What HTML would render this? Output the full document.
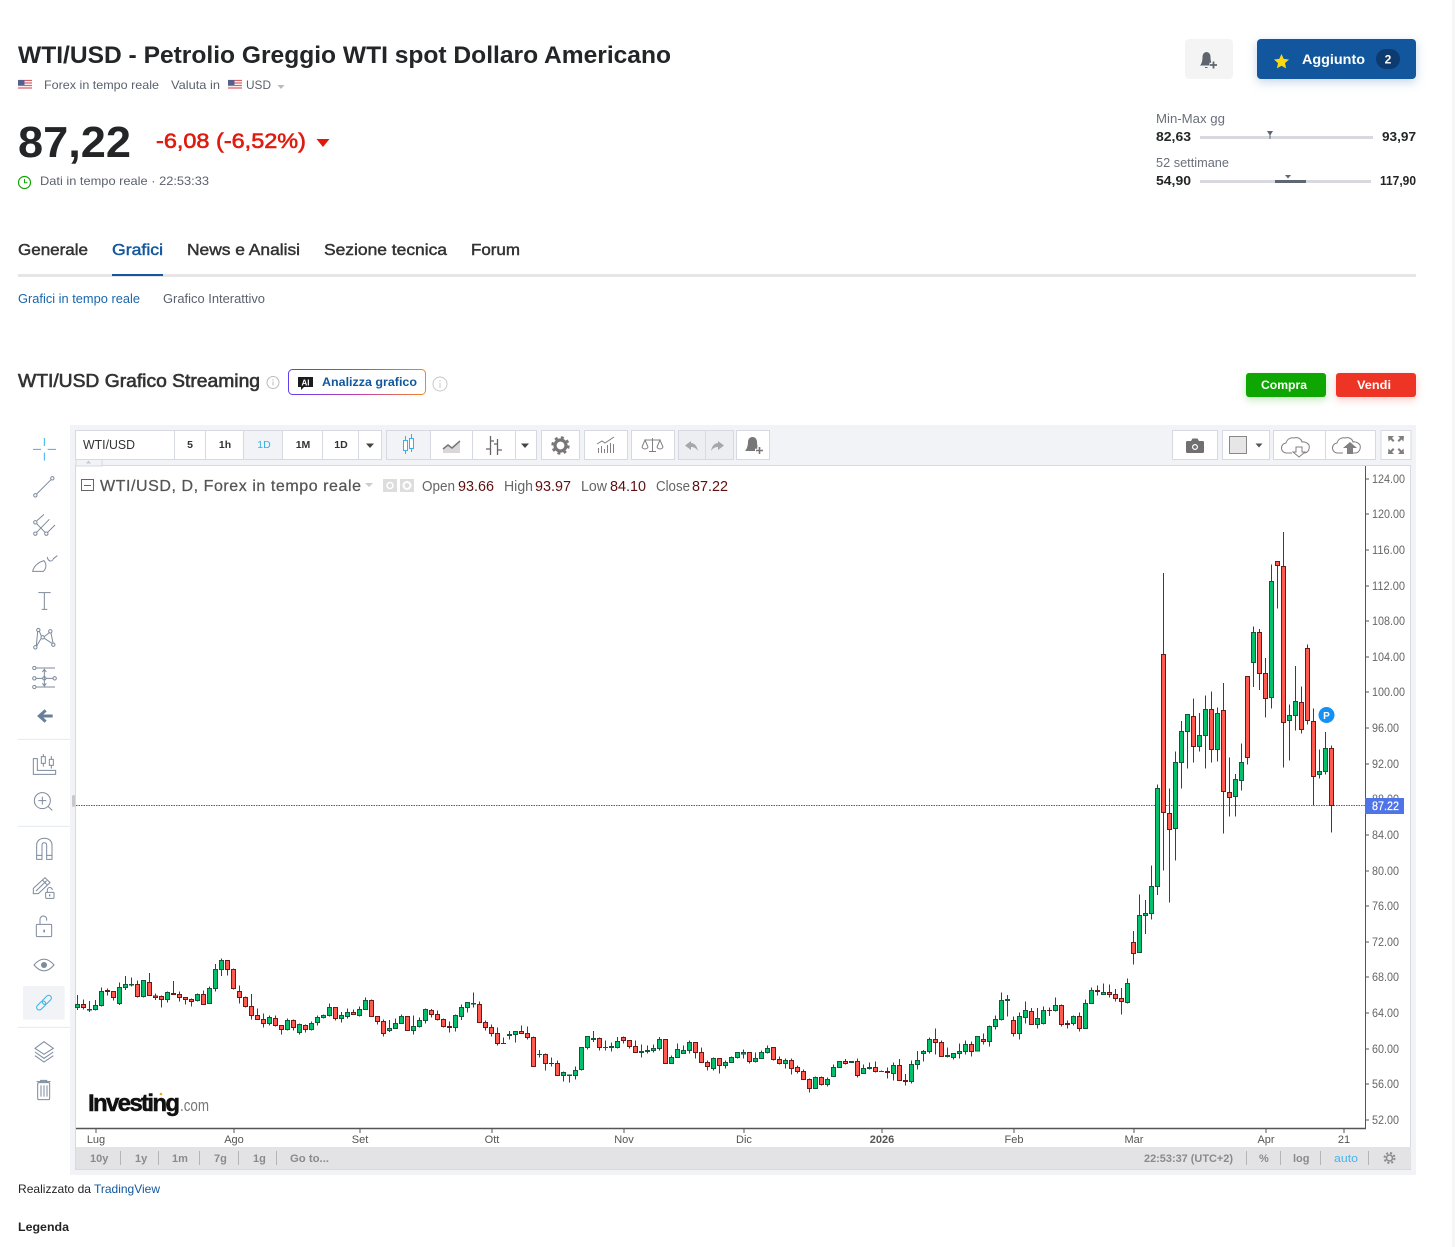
<!DOCTYPE html>
<html lang="it"><head><meta charset="utf-8"><title>WTI/USD Grafico</title>
<style>
html,body{margin:0;padding:0;background:#fff;width:1455px;height:1247px;overflow:hidden}
svg{display:block;font-family:"Liberation Sans",Arial,sans-serif}
.w{fill:none;stroke:#1c5039;stroke-width:3}
.g{fill:#03c06c;stroke:#14583c;stroke-width:3}
.r{fill:#ff5a50;stroke:#6b1a18;stroke-width:3}
.ic{fill:none;stroke:#7c8a9c;stroke-width:3}
.gy{fill:#808080}
.b{fill:#fff;stroke:#d6d9e1}
.p{font-size:12px;fill:#666}
.tm{font-size:11px;fill:#555;text-anchor:middle}
.bb{font-size:11px;fill:#8a8a8a;font-weight:bold}
.tb{font-size:10.5px;fill:#333;text-anchor:middle;font-weight:bold}
</style></head><body>
<svg width="1455" height="1247" viewBox="0 0 1455 1247" xmlns="http://www.w3.org/2000/svg">
<rect x="1452" y="0" width="3" height="1247" fill="#f6f6f6"/>

<!-- Heading -->
<text x="18" y="63" font-size="24" font-weight="bold" fill="#232526" textLength="653" lengthAdjust="spacingAndGlyphs">WTI/USD - Petrolio Greggio WTI spot Dollaro Americano</text>
<g id="flag"><rect x="18" y="80" width="14" height="10" fill="#fff"/><path d="M18 80.5h14M18 83h14M18 85.5h14M18 88h14" stroke="#d9616a" stroke-width="1.2"/><rect x="18" y="80" width="6.5" height="5" fill="#55608f"/></g>
<text x="44" y="89" font-size="12" fill="#5b616e" textLength="115" lengthAdjust="spacingAndGlyphs">Forex in tempo reale</text>
<text x="171" y="89" font-size="12" fill="#5b616e" textLength="49" lengthAdjust="spacingAndGlyphs">Valuta in</text>
<rect x="228" y="80" width="14" height="10" fill="#fff"/><path d="M228 80.5h14M228 83h14M228 85.5h14M228 88h14" stroke="#d9616a" stroke-width="1.2"/><rect x="228" y="80" width="6.5" height="5" fill="#55608f"/>
<text x="246" y="89" font-size="12" fill="#5b616e" textLength="25" lengthAdjust="spacingAndGlyphs">USD</text>
<path d="M277.500 85h7l-3.500 4z" fill="#b5bac4"/>

<text x="18" y="157" font-size="44" font-weight="bold" fill="#232526" textLength="113" lengthAdjust="spacingAndGlyphs">87,22</text>
<text x="156" y="148" font-size="21" fill="#e01b0e" stroke="#e01b0e" stroke-width=".6" textLength="150" lengthAdjust="spacingAndGlyphs">-6,08 (-6,52%)</text>
<path d="M316.500 139h13l-6.500 8z" fill="#dd1a0c"/>
<circle cx="24.500" cy="182.500" r="6" fill="none" stroke="#0ea600" stroke-width="1.200"/><path d="M24.500 179v3.800h3" fill="none" stroke="#0ea600"/>
<text x="40" y="185" font-size="12" fill="#5b616e" textLength="169" lengthAdjust="spacingAndGlyphs">Dati in tempo reale · 22:53:33</text>

<!-- top right -->
<rect x="1185" y="39" width="48" height="40" rx="4" fill="#f4f4f5"/>
<path d="M1201 65c1.500-2 2-5 2-8 0-2.800 1.500-4.500 3.500-4.500s3.500 1.700 3.500 4.500c0 3 .5 6 2 8zM1205 67.500h2.500" fill="#60646e" stroke="#60646e"/>
<path d="M1209.500 65h8M1213.500 61v8" stroke="#f4f4f5" stroke-width="4.500" fill="none"/>
<path d="M1210 65h7M1213.500 61.500v7" stroke="#60646e" stroke-width="1.800" fill="none"/>
<rect x="1257" y="39" width="159" height="40" rx="4" fill="#12579d" style="filter:drop-shadow(0 3px 5px rgba(18,87,157,.25))"/>
<path d="M1281.500 54l2.200 4.900 5.300.6-4 3.600 1.100 5.300-4.600-2.700-4.600 2.700 1.100-5.300-4-3.600 5.300-.6z" fill="#fcd80e"/>
<text x="1302" y="64" font-size="14" font-weight="bold" fill="#fff" textLength="63" lengthAdjust="spacingAndGlyphs">Aggiunto</text>
<rect x="1376" y="49" width="24" height="20" rx="10" fill="#0d3b70"/>
<text x="1388" y="63.500" font-size="12" font-weight="bold" fill="#fff" text-anchor="middle">2</text>

<text x="1156" y="123" font-size="12.500" fill="#6a6f7a" textLength="69" lengthAdjust="spacingAndGlyphs">Min-Max gg</text>
<text x="1156" y="141" font-size="12.500" font-weight="bold" fill="#232526" textLength="35" lengthAdjust="spacingAndGlyphs">82,63</text>
<rect x="1200" y="136" width="173" height="3" fill="#d8d9de"/>
<path d="M1267 131h6l-2.500 4v4h-1v-4z" fill="#5f6673"/>
<text x="1382" y="141" font-size="12.500" font-weight="bold" fill="#232526" textLength="34" lengthAdjust="spacingAndGlyphs">93,97</text>
<text x="1156" y="167" font-size="12.500" fill="#6a6f7a" textLength="73" lengthAdjust="spacingAndGlyphs">52 settimane</text>
<text x="1156" y="185" font-size="12.500" font-weight="bold" fill="#232526" textLength="35" lengthAdjust="spacingAndGlyphs">54,90</text>
<rect x="1200" y="180" width="171" height="3" fill="#d8d9de"/><rect x="1275" y="180" width="31" height="3" fill="#5f6673"/>
<path d="M1285 175h6l-3 3.500z" fill="#5f6673"/>
<text x="1380" y="185" font-size="12.500" font-weight="bold" fill="#232526" textLength="36" lengthAdjust="spacingAndGlyphs">117,90</text>

<!-- tabs -->
<g font-size="16" fill="#333" stroke="#333" stroke-width=".45">
<text x="18" y="255" textLength="70" lengthAdjust="spacingAndGlyphs">Generale</text>
<text x="112" y="255" fill="#12579d" stroke="#12579d" textLength="51" lengthAdjust="spacingAndGlyphs">Grafici</text>
<text x="187" y="255" textLength="113" lengthAdjust="spacingAndGlyphs">News e Analisi</text>
<text x="324" y="255" textLength="123" lengthAdjust="spacingAndGlyphs">Sezione tecnica</text>
<text x="471" y="255" textLength="49" lengthAdjust="spacingAndGlyphs">Forum</text>
</g>
<rect x="18" y="274" width="1398" height="3" fill="#e6e6e9"/><rect x="112" y="274" width="51" height="2" fill="#12579d"/>
<text x="18" y="303" font-size="12.500" fill="#1a66ad" textLength="122" lengthAdjust="spacingAndGlyphs">Grafici in tempo reale</text>
<text x="163" y="303" font-size="12.500" fill="#5b616e" textLength="102" lengthAdjust="spacingAndGlyphs">Grafico Interattivo</text>

<!-- section title -->
<text x="18" y="387" font-size="18" fill="#333" stroke="#333" stroke-width=".6" textLength="242" lengthAdjust="spacingAndGlyphs">WTI/USD Grafico Streaming</text>
<circle cx="273" cy="382.500" r="6" fill="none" stroke="#bcbcbc"/><path d="M273 381.500v4M273 379v1.500" stroke="#bcbcbc"/>
<defs><linearGradient id="ai" x1="0" x2="1" y1="0" y2="0"><stop offset="0" stop-color="#5b3ff0"/><stop offset=".5" stop-color="#c03bb0"/><stop offset="1" stop-color="#f7851e"/></linearGradient></defs>
<rect x="288.500" y="369.500" width="137" height="25" rx="4" fill="#fff" stroke="url(#ai)"/>
<path d="M298 377h15v10h-9l-3 3v-3h-3z" fill="#1c1c1c"/>
<text x="305.500" y="385.500" font-size="8" font-weight="bold" fill="#fff" text-anchor="middle">AI</text>
<text x="322" y="386" font-size="12" font-weight="bold" fill="#12579d" textLength="95" lengthAdjust="spacingAndGlyphs">Analizza grafico</text>
<circle cx="440" cy="384" r="7" fill="none" stroke="#c8c8c8"/><path d="M440 383v5M440 380v1.500" stroke="#c8c8c8"/>
<rect x="1246" y="373" width="80" height="24" rx="3" fill="#0ea600" style="filter:drop-shadow(0 3px 4px rgba(14,166,0,.25))"/>
<text x="1261" y="389" font-size="12" font-weight="bold" fill="#fff" textLength="46" lengthAdjust="spacingAndGlyphs">Compra</text>
<rect x="1336" y="373" width="80" height="24" rx="3" fill="#ee3424" style="filter:drop-shadow(0 3px 4px rgba(238,52,36,.25))"/>
<text x="1357" y="389" font-size="12" font-weight="bold" fill="#fff" textLength="34" lengthAdjust="spacingAndGlyphs">Vendi</text>

<!-- chart container -->
<rect x="70" y="425" width="1346" height="750" fill="#f1f3f6"/>
<rect x="75.500" y="465.500" width="1335" height="704" fill="#fff" stroke="#d6d9e1"/>

<!-- top toolbar -->
<rect x="76" y="459" width="26" height="7" fill="#f1f3f6" stroke="#d6d9e1"/><path d="M86 463.500h5l-2.500-3z" fill="#c5c8d0"/>
<rect x="75.500" y="430.500" width="306" height="29" class="b"/>
<rect x="244" y="431" width="39" height="28" fill="#f1f3f6"/>
<path d="M174.500 431v28M205.500 431v28M243.500 431v28M282.500 431v28M322.500 431v28M358.500 431v28" stroke="#d6d9e1"/>
<text x="83" y="449" font-size="12.500" fill="#333" textLength="52" lengthAdjust="spacingAndGlyphs">WTI/USD</text>
<text x="190" y="448" class="tb">5</text><text x="225" y="448" class="tb">1h</text>
<text x="264" y="448" class="tb" style="fill:#35b2e8;font-weight:normal">1D</text>
<text x="303" y="448" class="tb">1M</text><text x="341" y="448" class="tb">1D</text>
<path d="M366 443.500h8l-4 4.500z" fill="#444"/>
<rect x="386.500" y="430.500" width="150" height="29" class="b"/>
<rect x="387" y="431" width="43" height="28" fill="#f1f3f6"/>
<path d="M430.500 431v28M472.500 431v28M515.500 431v28" stroke="#d6d9e1"/>
<path d="M405.500 436v18M411.500 434v18" stroke="#35b2e8"/><rect x="403.500" y="440.500" width="4" height="10" fill="#fff" stroke="#35b2e8"/><rect x="409.500" y="438.500" width="4" height="10" fill="#fff" stroke="#35b2e8"/>
<path d="M443 453v-4l5-4 4 3 8-7v12z" fill="#d8d8d8"/><path d="M443 449l5-4 4 3 8-7" fill="none" stroke="#777" stroke-width="1.500"/>
<path d="M490.500 436v19M497.500 439v16M486 449h4M491 441h3M494 444h3M498 450h4" fill="none" stroke="#666" stroke-width="1.300"/>
<path d="M521 443.500h8l-4 4.500z" fill="#444"/>
<rect x="541.500" y="430.500" width="38" height="29" class="b"/>
<circle cx="560.500" cy="445.500" r="5.500" fill="none" stroke="#777" stroke-width="3.200"/><circle cx="560.500" cy="445.500" r="8" fill="none" stroke="#777" stroke-width="2.400" stroke-dasharray="3 3.300"/>
<rect x="584.500" y="430.500" width="43" height="29" class="b"/>
<path d="M598.500 453v-5M601.500 453v-7M604.500 453v-4M607.500 453v-8M610.500 453v-10M613.500 453v-9M597 444l5-3 3 2 9-6" fill="none" stroke="#808080"/>
<rect x="631.500" y="430.500" width="43" height="29" class="b"/>
<path d="M652.500 438v13M645 440h15M645 440l-3 7a3.200 3 0 0 0 6 0zM660 440l-3 7a3.200 3 0 0 0 6 0zM649 451.500h7" fill="none" stroke="#808080"/>
<rect x="678.500" y="430.500" width="55" height="29" fill="#eceef2" stroke="#d6d9e1"/><path d="M705.500 431v28" stroke="#d6d9e1"/>
<path d="M691 441l-6 4.500 6 4.500v-3c3 0 5 1 7 4-1-5-3-7.500-7-8zM718 441l6 4.500-6 4.500v-3c-3 0-5 1-7 4 1-5 3-7.500 7-8z" fill="#a5a7ad"/>
<rect x="736.500" y="430.500" width="33" height="29" class="b"/>
<path d="M745 451c2-2 3-6 3-9 0-3 2-5 4.500-5s4.500 2 4.500 5c0 3 1 7 3 9z" fill="#777"/><path d="M755 450.500h8M759 446.500v8" stroke="#fff" stroke-width="3.500"/><path d="M756 450.500h7M759.500 447v7" stroke="#777" stroke-width="1.600"/>

<rect x="1172.500" y="430.500" width="45" height="29" class="b"/>
<path d="M1187 441h4l1.500-2.500h5l1.500 2.500h4a1.500 1.500 0 0 1 1 1v10a1.500 1.500 0 0 1-1 1h-16a1.500 1.500 0 0 1-1-1v-10a1.500 1.500 0 0 1 1-1z" fill="#707070"/><circle cx="1195" cy="447" r="3.500" fill="#fff" stroke="#707070"/><circle cx="1195" cy="447" r="1.800" fill="#707070"/>
<rect x="1222.500" y="430.500" width="47" height="29" class="b"/>
<rect x="1229.500" y="436.500" width="17" height="17" fill="#e6e6e6" stroke="#888"/><path d="M1255.500 443.500h7l-3.500 4z" fill="#555"/>
<rect x="1273.500" y="430.500" width="102" height="29" class="b"/><path d="M1325.500 431v28" stroke="#d6d9e1"/>
<path d="M1292 453h-5a5 5 0 0 1-1-10c1-4 5-6 8-5 3-1 7 0 8 4 1-.5 5 0 7 3 1 4-1 8-5 8h-4" fill="none" stroke="#808080"/><path d="M1296 447h6v5h3l-6 5-6-5h3z" fill="#fff" stroke="#808080"/>
<path d="M1343 453h-5a5 5 0 0 1-1-10c1-4 5-6 8-5 3-1 7 0 8 4 1-.5 5 0 7 3 1 4-1 8-5 8h-4" fill="none" stroke="#808080"/><path d="M1347 454v-6h-4l7-6 7 6h-4v6z" fill="#808080"/>
<rect x="1381" y="430.500" width="30" height="29" class="b"/>
<path d="M1388 436h6l-2 2 2.500 2.500-1.500 1.500-2.500-2.500-2 2zM1404 436h-6l2 2-2.500 2.500 1.500 1.500 2.500-2.500 2 2zM1388 454h6l-2-2 2.500-2.500-1.500-1.500-2.500 2.500-2-2zM1404 454h-6l2-2-2.500-2.500 1.500-1.500 2.500 2.500 2-2z" fill="#808080"/>

<!-- legend -->
<rect x="81.500" y="479.500" width="12" height="11" fill="#fff" stroke="#666"/><path d="M84 485.500h7" stroke="#666"/>
<text x="100" y="491" font-size="16" fill="#555" stroke="#555" stroke-width=".25" textLength="261" lengthAdjust="spacing">WTI/USD, D, Forex in tempo reale</text>
<path d="M365 483h8l-4 4z" fill="#ccc"/>
<rect x="383" y="479" width="14" height="13" fill="#ddd"/><circle cx="390" cy="485.500" r="3" fill="none" stroke="#fff" stroke-width="1.500"/>
<rect x="400" y="479" width="14" height="13" fill="#ddd"/><circle cx="407" cy="485.500" r="3.500" fill="none" stroke="#fff" stroke-width="2"/>
<g font-size="14.500" fill="#666">
<text x="422" y="491" textLength="33" lengthAdjust="spacingAndGlyphs">Open</text><text x="504" y="491" textLength="29" lengthAdjust="spacingAndGlyphs">High</text><text x="581" y="491" textLength="26" lengthAdjust="spacingAndGlyphs">Low</text><text x="656" y="491" textLength="34" lengthAdjust="spacingAndGlyphs">Close</text>
</g>
<g font-size="14.500" fill="#5c1010">
<text x="458" y="491" textLength="36" lengthAdjust="spacingAndGlyphs">93.66</text><text x="535" y="491" textLength="36" lengthAdjust="spacingAndGlyphs">93.97</text><text x="610" y="491" textLength="36" lengthAdjust="spacingAndGlyphs">84.10</text><text x="692" y="491" textLength="36" lengthAdjust="spacingAndGlyphs">87.22</text>
</g>

<!-- last price line -->
<path d="M76 805.500H1365" stroke="#3a5fd9" stroke-dasharray="1.500 1"/>

<!-- candles section 1 -->
<g transform="translate(70 950) scale(.33333)" shape-rendering="crispEdges">
<path class="w" d="M22.500 135V180M40.500 148V178M58.500 153V186M76.500 150V182M94.500 112V170M112.500 115V137M130.500 124V152M148.500 97V165M166.500 78V120M184.500 82V110M202.500 91V143M220.500 90V143M238.500 69V137M256.500 130V150M274.500 137V173M292.500 124V158M310.500 93V135M328.500 124V155M346.500 142V164M364.500 146V170M382.500 130V155M400.500 121V164M418.500 109V160M436.500 42V124M454.500 25V78M472.500 31V77M490.500 55V118M508.500 106V161M526.500 139V173M544.500 132V209M562.500 175V209M580.500 190V233M598.500 196V227M616.500 196V229M634.500 226V254M652.500 205V241M670.500 208V242M688.500 220V254M706.500 224V248M724.500 214V242M742.500 196V227M760.500 193V206M778.500 160V199M796.500 172V212M814.500 186V218M832.500 175V205M850.500 178V193M868.500 169V199M886.500 142V178M904.500 148V200M922.500 199V224M940.500 208V260M958.500 210V246M976.500 205V235M994.500 193V220M1012.500 199V241M1030.500 196V254M1048.500 202V232"/>
<path class="g" d="M16.500 164h12v8h-12zM52.500 179h12v1h-12zM70.500 167h12v11h-12zM88.500 125h12v41h-12zM142.500 113h12v47h-12zM160.500 104h12v8h-12zM178.500 104h12v1h-12zM214.500 92h12v47h-12zM286.500 128h12v20h-12zM376.500 134h12v17h-12zM412.500 116h12v44h-12zM430.500 59h12v56h-12zM448.500 32h12v26h-12zM592.500 203h12v17h-12zM646.500 212h12v26h-12zM682.500 224h12v23h-12zM718.500 221h12v17h-12zM736.500 203h12v14h-12zM754.500 197h12v5h-12zM772.500 173h12v23h-12zM808.500 197h12v8h-12zM826.500 188h12v11h-12zM862.500 179h12v17h-12zM880.500 152h12v26h-12zM952.500 236h12v5h-12zM970.500 221h12v14h-12zM988.500 200h12v20h-12zM1024.500 230h12v11h-12zM1042.500 212h12v17h-12z"/>
<path class="r" d="M34.500 164h12v8h-12zM106.500 122h12v2h-12zM124.500 125h12v17h-12zM196.500 104h12v35h-12zM232.500 98h12v38h-12zM250.500 138h12v5h-12zM268.500 140h12v8h-12zM304.500 131h12v2h-12zM322.500 134h12v8h-12zM340.500 143h12v5h-12zM358.500 149h12v5h-12zM394.500 134h12v29h-12zM466.500 32h12v26h-12zM484.500 59h12v56h-12zM502.500 125h12v17h-12zM520.500 143h12v26h-12zM538.500 170h12v26h-12zM556.500 197h12v11h-12zM574.500 209h12v11h-12zM610.500 206h12v20h-12zM628.500 227h12v11h-12zM664.500 212h12v20h-12zM700.500 227h12v11h-12zM790.500 173h12v32h-12zM844.500 188h12v5h-12zM898.500 152h12v47h-12zM916.500 200h12v14h-12zM934.500 215h12v35h-12zM1006.500 200h12v41h-12z"/>
</g>
<!-- candles section 2 -->
<g transform="translate(420 980) scale(.33333)" shape-rendering="crispEdges">
<path class="w" d="M16.500 85V131M34.500 87V113M52.500 91V122M70.500 115V142M88.500 124V158M106.500 103V155M124.500 73V120M142.500 67V98M160.500 37V83M178.500 64V128M196.500 121V152M214.500 133V170M232.500 142V197M250.500 172V191M268.500 153V179M286.500 154V188M304.500 136V162M322.500 139V178M340.500 169V260M358.500 210V233M376.500 220V272M394.500 232V260M412.500 241V287M430.500 274V305M448.500 283V308M466.500 259V299M484.500 202V272M502.500 169V209M520.500 153V186M538.500 172V212M556.500 181V212M574.500 187V215M592.500 171V206M610.500 169V190M628.500 181V206M646.500 181V218M664.500 193V233M682.500 196V221M700.500 193V218M718.500 171V212M736.500 178V251M754.500 226V251M772.500 190V233M790.500 196V221M808.500 181V221M826.500 187V236M844.500 202V248M862.500 241V272M880.500 232V272M898.500 235V281M916.500 241V266M934.500 229V248M952.500 217V236M970.500 208V236M988.500 217V251M1006.500 217V247M1024.500 211V236M1042.500 196V221M1060.500 202V241"/>
<path class="g" d="M10.500 89h12v32h-12zM100.500 107h12v35h-12zM118.500 83h12v26h-12zM136.500 68h12v14h-12zM154.500 70h12v2h-12zM262.500 163h12v3h-12zM280.500 155h12v8h-12zM352.500 223h12v1h-12zM424.500 278h12v8h-12zM442.500 285h12v1h-12zM460.500 272h12v14h-12zM478.500 203h12v65h-12zM496.500 170h12v32h-12zM514.500 175h12v3h-12zM550.500 202h12v1h-12zM568.500 199h12v3h-12zM586.500 185h12v17h-12zM658.500 214h12v3h-12zM676.500 211h12v3h-12zM694.500 206h12v5h-12zM712.500 179h12v26h-12zM748.500 233h12v17h-12zM766.500 209h12v23h-12zM784.500 212h12v8h-12zM802.500 188h12v23h-12zM874.500 236h12v29h-12zM910.500 248h12v8h-12zM928.500 233h12v14h-12zM946.500 218h12v14h-12zM964.500 217h12v5h-12zM1000.500 236h12v8h-12zM1018.500 218h12v17h-12zM1036.500 206h12v11h-12z"/>
<path class="r" d="M28.500 92h12v11h-12zM46.500 104h12v14h-12zM64.500 119h12v20h-12zM82.500 140h12v2h-12zM172.500 74h12v53h-12zM190.500 128h12v14h-12zM208.500 143h12v17h-12zM226.500 161h12v29h-12zM244.500 190h12v1h-12zM298.500 155h12v5h-12zM316.500 161h12v11h-12zM334.500 173h12v86h-12zM370.500 224h12v26h-12zM388.500 250h12v1h-12zM406.500 251h12v35h-12zM532.500 176h12v26h-12zM604.500 173h12v8h-12zM622.500 182h12v17h-12zM640.500 200h12v17h-12zM730.500 179h12v71h-12zM820.500 188h12v29h-12zM838.500 218h12v29h-12zM856.500 248h12v11h-12zM892.500 236h12v20h-12zM982.500 218h12v26h-12zM1054.500 203h12v35h-12z"/>
</g>
<!-- candles section 3 -->
<g transform="translate(770 970) scale(.33333)" shape-rendering="crispEdges">
<path class="w" d="M28.500 259V284M46.500 265V296M64.500 265V314M82.500 286V310M100.500 298V329M118.500 325V368M136.500 319V356M154.500 320V347M172.500 322V350M190.500 283V320M208.500 274V293M226.500 267V284M244.500 274V278M262.500 265V323M280.500 283V311M298.500 277V299M316.500 274V308M334.500 301V306M352.500 292V326M370.500 277V332M388.500 267V332M406.500 312V347M424.500 271V341M442.500 243V299M460.500 240V275M478.500 202V251M496.500 175V254M514.500 211V261M532.500 232V262M550.500 250V269M568.500 220V266M586.500 211V254M604.500 214V260M622.500 199V244M640.500 190V223M658.500 166V230M676.500 136V178M694.500 67V151M712.500 75V140M730.500 139V200M748.500 127V209M766.500 94V161M784.500 114V164M802.500 114V176M820.500 109V164M838.500 112V138M856.500 82V124M874.500 103V170M892.500 151V176M910.500 136V166M928.500 127V185M946.500 88V175M964.500 52V101M982.500 46V77M1000.500 40V73M1018.500 43V82M1036.500 57V94M1054.500 54V134M1072.500 25V101"/>
<path class="g" d="M40.500 272h12v8h-12zM130.500 323h12v32h-12zM166.500 329h12v14h-12zM184.500 293h12v26h-12zM202.500 275h12v17h-12zM238.500 275h12v2h-12zM274.500 296h12v14h-12zM292.500 292h12v3h-12zM328.500 304h12v1h-12zM364.500 287h12v23h-12zM418.500 284h12v50h-12zM436.500 272h12v11h-12zM454.500 245h12v5h-12zM472.500 209h12v35h-12zM526.500 256h12v3h-12zM544.500 251h12v11h-12zM562.500 245h12v5h-12zM580.500 224h12v20h-12zM616.500 200h12v43h-12zM652.500 170h12v44h-12zM670.500 149h12v20h-12zM688.500 92h12v56h-12zM706.500 88h12v3h-12zM742.500 140h12v50h-12zM760.500 122h12v20h-12zM796.500 146h12v17h-12zM814.500 122h12v39h-12zM850.500 107h12v14h-12zM904.500 140h12v20h-12zM940.500 101h12v74h-12zM958.500 62h12v38h-12zM994.500 68h12v5h-12zM1066.500 41h12v56h-12z"/>
<path class="r" d="M22.500 269h12v11h-12zM58.500 272h12v23h-12zM76.500 293h12v11h-12zM94.500 305h12v23h-12zM112.500 329h12v26h-12zM148.500 323h12v20h-12zM220.500 275h12v5h-12zM256.500 275h12v41h-12zM310.500 293h12v11h-12zM346.500 304h12v3h-12zM382.500 287h12v44h-12zM400.500 331h12v3h-12zM490.500 209h12v8h-12zM508.500 218h12v41h-12zM598.500 224h12v20h-12zM634.500 209h12v5h-12zM724.500 152h12v38h-12zM778.500 125h12v38h-12zM832.500 121h12v1h-12zM868.500 107h12v56h-12zM886.500 160h12v3h-12zM922.500 140h12v35h-12zM976.500 62h12v2h-12zM1012.500 68h12v5h-12zM1030.500 74h12v11h-12zM1048.500 86h12v8h-12z"/>
</g>
<!-- candles section 4 -->
<g transform="translate(1120 740) scale(.33333)" shape-rendering="crispEdges">
<path class="w" d="M40.500 573V674M58.500 463V638M76.500 480V582M94.500 376V539M112.500 133V465M130.500 -501V392M148.500 145V488M166.500 34V362M184.500 -57V146M202.500 -77V86M220.500 -125V68M238.500 -81V35M256.500 -134V86M274.500 -146V68M292.500 -98V65M310.500 -171V281M328.500 52V230M346.500 102V230M364.500 10V152M382.500 -191V74M400.500 -341V-159M418.500 -333V-150M436.500 -246V-67M454.500 -527V-94M472.500 -536V-394M490.500 -624V83M508.500 -107V62M526.500 -222V-29M544.500 -161V-20M562.500 -287V-47M580.500 -95V196M598.500 29V116M616.500 -24V103M634.500 16V278"/>
<path class="g" d="M52.500 527h12v110h-12zM70.500 521h12v5h-12zM88.500 440h12v80h-12zM106.500 146h12v293h-12zM160.500 68h12v197h-12zM178.500 -26h12v93h-12zM196.500 -76h12v51h-12zM232.500 -13h12v32h-12zM250.500 -91h12v78h-12zM286.500 -79h12v107h-12zM340.500 119h12v50h-12zM358.500 68h12v53h-12zM394.500 -322h12v89h-12zM448.500 -475h12v347h-12zM502.500 -73h12v14h-12zM520.500 -115h12v41h-12zM592.500 95h12v8h-12zM610.500 26h12v68h-12z"/>
<path class="r" d="M34.500 608h12v32h-12zM124.500 -256h12v473h-12zM142.500 221h12v47h-12zM214.500 -70h12v89h-12zM268.500 -91h12v119h-12zM304.500 -88h12v242h-12zM322.500 158h12v14h-12zM376.500 -190h12v242h-12zM412.500 -322h12v122h-12zM430.500 -199h12v74h-12zM466.500 -535h12v11h-12zM484.500 -520h12v467h-12zM538.500 -112h12v80h-12zM556.500 -274h12v215h-12zM574.500 -55h12v164h-12zM628.500 26h12v170h-12z"/>
</g>
<circle cx="1326.500" cy="715" r="8" fill="#1391f5"/><text x="1326.500" y="719" font-size="10" font-weight="bold" fill="#fff" text-anchor="middle">P</text>

<!-- price axis -->
<path d="M1365.500 466V1129" stroke="#555"/>
<path d="M76 1128.500H1366" stroke="#555" stroke-width="1.500"/>
<path d="M1366 479h3M1366 514h3M1366 550h3M1366 586h3M1366 621h3M1366 657h3M1366 692h3M1366 728h3M1366 764h3M1366 799h3M1366 835h3M1366 871h3M1366 906h3M1366 942h3M1366 977h3M1366 1013h3M1366 1049h3M1366 1084h3M1366 1120h3" stroke="#555"/>
<g class="p">
<text x="1372" y="483" textLength="33" lengthAdjust="spacingAndGlyphs">124.00</text>
<text x="1372" y="518" textLength="33" lengthAdjust="spacingAndGlyphs">120.00</text>
<text x="1372" y="554" textLength="33" lengthAdjust="spacingAndGlyphs">116.00</text>
<text x="1372" y="590" textLength="33" lengthAdjust="spacingAndGlyphs">112.00</text>
<text x="1372" y="625" textLength="33" lengthAdjust="spacingAndGlyphs">108.00</text>
<text x="1372" y="661" textLength="33" lengthAdjust="spacingAndGlyphs">104.00</text>
<text x="1372" y="696" textLength="33" lengthAdjust="spacingAndGlyphs">100.00</text>
<text x="1372" y="732" textLength="27" lengthAdjust="spacingAndGlyphs">96.00</text>
<text x="1372" y="768" textLength="27" lengthAdjust="spacingAndGlyphs">92.00</text>
<text x="1372" y="803" textLength="27" lengthAdjust="spacingAndGlyphs">88.00</text>
<text x="1372" y="839" textLength="27" lengthAdjust="spacingAndGlyphs">84.00</text>
<text x="1372" y="875" textLength="27" lengthAdjust="spacingAndGlyphs">80.00</text>
<text x="1372" y="910" textLength="27" lengthAdjust="spacingAndGlyphs">76.00</text>
<text x="1372" y="946" textLength="27" lengthAdjust="spacingAndGlyphs">72.00</text>
<text x="1372" y="981" textLength="27" lengthAdjust="spacingAndGlyphs">68.00</text>
<text x="1372" y="1017" textLength="27" lengthAdjust="spacingAndGlyphs">64.00</text>
<text x="1372" y="1053" textLength="27" lengthAdjust="spacingAndGlyphs">60.00</text>
<text x="1372" y="1088" textLength="27" lengthAdjust="spacingAndGlyphs">56.00</text>
<text x="1372" y="1124" textLength="27" lengthAdjust="spacingAndGlyphs">52.00</text>
</g>
<rect x="1365" y="798" width="39" height="16" fill="#4f74e8"/>
<text x="1372" y="810" font-size="12" fill="#fff" stroke="#fff" stroke-width=".2" textLength="27" lengthAdjust="spacingAndGlyphs">87.22</text>

<!-- time axis -->
<path d="M96 1129v4M234 1129v4M360 1129v4M492 1129v4M624 1129v4M744 1129v4M882 1129v4M1014 1129v4M1134 1129v4M1266 1129v4M1344 1129v4" stroke="#555"/>
<g class="tm"><text x="96" y="1143">Lug</text><text x="234" y="1143">Ago</text><text x="360" y="1143">Set</text><text x="492" y="1143">Ott</text><text x="624" y="1143">Nov</text><text x="744" y="1143">Dic</text><text x="882" y="1143" font-weight="bold">2026</text><text x="1014" y="1143">Feb</text><text x="1134" y="1143">Mar</text><text x="1266" y="1143">Apr</text><text x="1344" y="1143">21</text></g>

<!-- bottom bar -->
<rect x="76" y="1147" width="1335" height="22" fill="#e3e3e5"/>
<path d="M120.500 1151v14M158.500 1151v14M199.500 1151v14M238.500 1151v14M276.500 1151v14M1246.500 1151v14M1280.500 1151v14M1320.500 1151v14M1368.500 1151v14" stroke="#b5b5b8"/>
<g class="bb">
<text x="90" y="1162">10y</text><text x="135" y="1162">1y</text><text x="172" y="1162">1m</text><text x="214" y="1162">7g</text><text x="253" y="1162">1g</text><text x="290" y="1162" textLength="39" lengthAdjust="spacingAndGlyphs">Go to...</text>
<text x="1144" y="1162" textLength="89" lengthAdjust="spacingAndGlyphs">22:53:37 (UTC+2)</text><text x="1259" y="1162">%</text><text x="1293" y="1162">log</text><text x="1334" y="1162" style="fill:#48b4ea;font-weight:normal" textLength="24" lengthAdjust="spacingAndGlyphs">auto</text>
</g>
<circle cx="1389.500" cy="1158" r="3" fill="none" stroke="#8a8a8a" stroke-width="1.500"/><circle cx="1389.500" cy="1158" r="5" fill="none" stroke="#8a8a8a" stroke-width="2" stroke-dasharray="2 2"/>

<!-- logo -->
<text x="88" y="1111" font-size="24" font-weight="bold" fill="#111" stroke="#111" stroke-width=".5" textLength="92" lengthAdjust="spacing">Investing</text>
<text x="180" y="1111" font-size="17" fill="#777" textLength="29" lengthAdjust="spacingAndGlyphs">.com</text>
<circle cx="161" cy="1094" r="1.300" fill="#f5a623"/>

<!-- left toolbar part 1 -->
<g transform="translate(10 430) scale(.33333)">
<path d="M103 24V48M103 68V92M69 58H93M113 58H138" fill="none" stroke="#35b2e8" stroke-width="3"/>
<g class="ic">
<circle cx="76" cy="196" r="5"/><circle cx="127" cy="145" r="5"/><path d="M80 192L123 149"/>
<circle cx="76" cy="277" r="5"/><circle cx="76" cy="311" r="5"/><circle cx="109" cy="311" r="5"/><path d="M81 272L102 253M80 307L118 268M113 307L135 285M80 281L105 307"/>
<path d="M68 424C72 405 90 395 102 392C110 402 110 415 100 424ZM112 381C114 396 128 396 130 386L142 377"/>
<path d="M85 488H122M103 488V538M95 538H112"/>
<circle cx="85" cy="600" r="5"/><circle cx="121" cy="604" r="5"/><circle cx="98" cy="622" r="5"/><circle cx="76" cy="652" r="5"/><circle cx="130" cy="644" r="5"/><path d="M83 605L79 647M88 604L94 618M118 608L103 620M103 625L126 640M123 609L129 639M93 626L80 648"/>
<circle cx="73" cy="714" r="5"/><circle cx="73" cy="745" r="5"/><circle cx="73" cy="771" r="5"/><circle cx="103" cy="745" r="5"/><circle cx="134" cy="745" r="5"/><path d="M78 714H135M78 745H98M108 745H129M78 771H135M103 718V768M97 726L103 718L109 726M97 760L103 768L109 760"/>
<path d="M128 858H92M107 841L88 858L107 875" stroke="#677f98" stroke-width="9"/>
<path d="M70 986V1033H137V1021H82V986Z"/><path d="M100 972V1010M124 978V1016"/>
<rect x="94" y="980" width="12" height="20" fill="#fff"/><rect x="118" y="988" width="12" height="18" fill="#fff"/>
</g>
<path d="M24 928H180" stroke="#e4e9ef" stroke-width="3"/>
</g>
<!-- left toolbar part 2 -->
<g transform="translate(10 780) scale(.33333)">
<path d="M24 139H180M24 742H180" stroke="#e4e9ef" stroke-width="3"/>
<rect x="39" y="618" width="125" height="101" rx="3" fill="#f1f3f6"/>
<g class="ic">
<circle cx="97" cy="62" r="24"/><path d="M114 79L127 91M85 62H109M97 50V74"/>
<path d="M80 238V195C80 168 126 168 126 195V238H110V195C110 186 96 186 96 195V238ZM80 226H96M110 226H126"/>
<path d="M70 325L105 293L120 308L85 341L70 341ZM97 300L113 316M78 333L110 302"/>
<rect x="107" y="337" width="25" height="18" rx="2"/><path d="M112 337V330A7.500 7.500 0 0 1 127 330"/>
<rect x="79" y="433" width="46" height="37" rx="3"/><path d="M90 433V418A10 10 0 0 1 110 418V422"/>
<path d="M72 555Q102 520 132 555Q102 590 72 555Z"/>
<path d="M102 785L130 805L102 823L75 805ZM75 816L102 835L130 816M75 827L102 846L130 827"/>
<path d="M80 905H122M92 905V901H110V905M93 916V950M102 916V950M111 916V950"/>
<rect x="83" y="908" width="36" height="51" rx="4"/>
</g>
<rect x="117" y="343" width="4" height="6" fill="#7c8a9c"/>
<rect x="100" y="449" width="5" height="8" fill="#7c8a9c"/>
<circle cx="102" cy="555" r="9" fill="#7c8a9c"/>
<g fill="none" stroke="#35b2e8" stroke-width="3" transform="rotate(-45 102 668)"><rect x="74" y="660" width="32" height="16" rx="8"/><rect x="98" y="660" width="32" height="16" rx="8"/></g>
</g>
<rect x="72" y="795" width="3" height="12" rx="1.500" fill="#c8c8cc"/>

<!-- footer -->
<text x="18" y="1193" font-size="12" fill="#232526" textLength="73" lengthAdjust="spacingAndGlyphs">Realizzato da</text>
<text x="94" y="1193" font-size="12" fill="#12579d" textLength="66" lengthAdjust="spacingAndGlyphs">TradingView</text>
<text x="18" y="1231" font-size="12" font-weight="bold" fill="#232526" textLength="51" lengthAdjust="spacingAndGlyphs">Legenda</text>
</svg>
</body></html>
